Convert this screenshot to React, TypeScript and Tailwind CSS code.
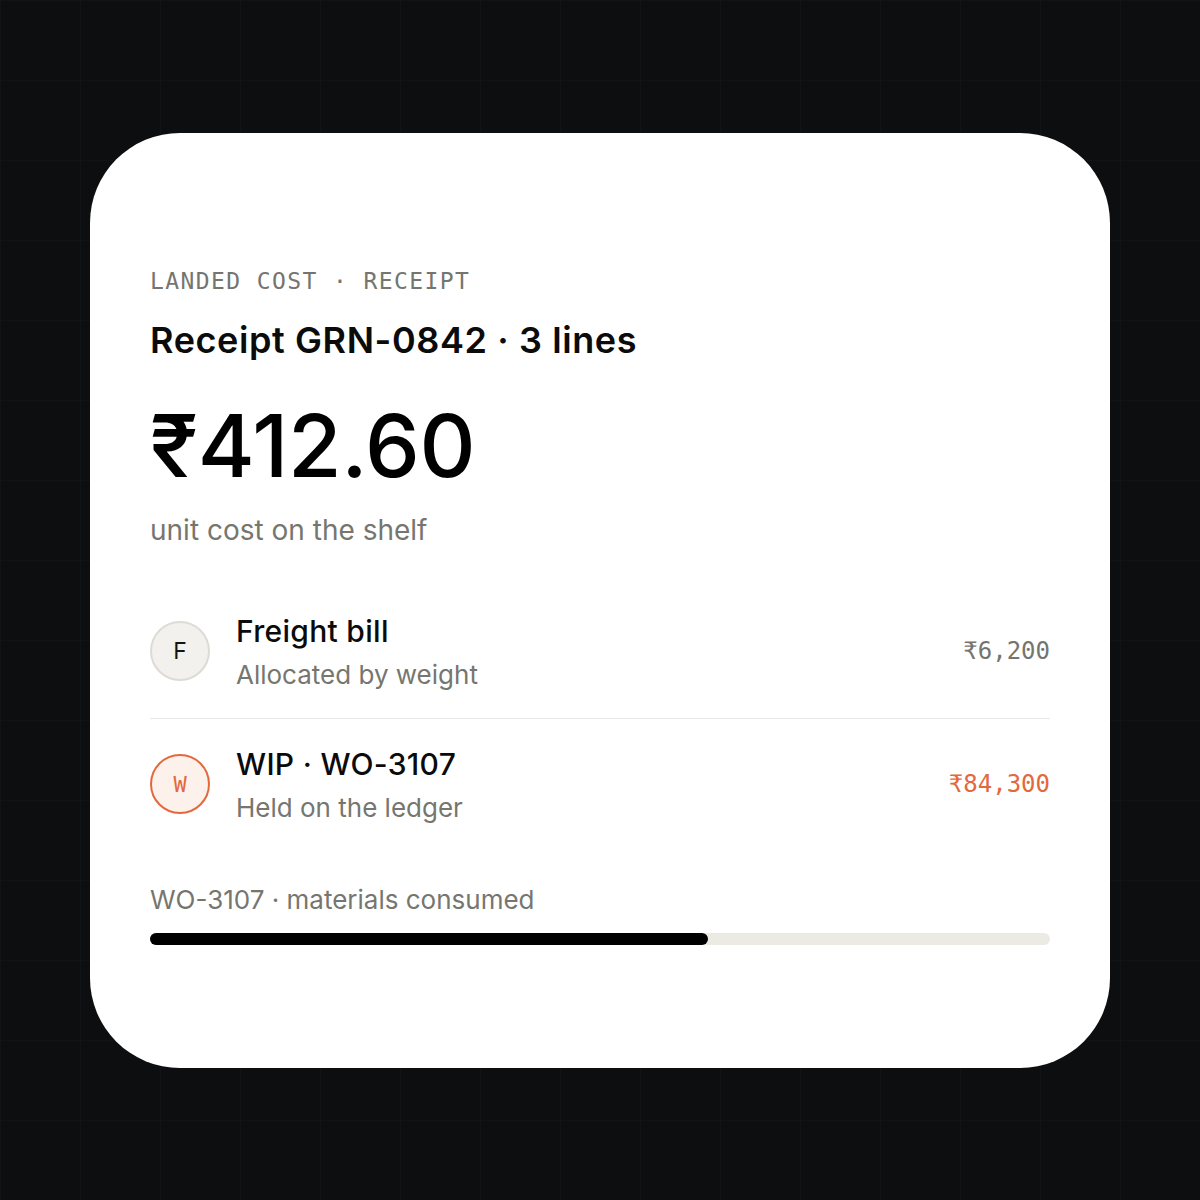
import { useState } from 'react'

interface Line {
  id: string
  initial: string
  title: string
  note: string
  amount: string
  accent?: boolean
}

const lines: Line[] = [
  {
    id: 'freight',
    initial: 'F',
    title: 'Freight bill',
    note: 'Allocated by weight',
    amount: '₹6,200',
  },
  {
    id: 'wip',
    initial: 'W',
    title: 'WIP · WO-3107',
    note: 'Held on the ledger',
    amount: '₹84,300',
    accent: true,
  },
]

const sans = "font-['Inter','Noto_Sans',sans-serif]"
const mono = "font-['DejaVu_Sans_Mono','Liberation_Mono',monospace]"

export default function App() {
  const [consumed] = useState(62)

  return (
    <div
      className={`min-h-[1200px] w-full flex items-center justify-center bg-[#0d0e10] bg-[linear-gradient(to_right,#121316_1px,transparent_1px),linear-gradient(to_bottom,#121316_1px,transparent_1px)] bg-[size:80px_80px] ${sans}`}
    >
      <div className="w-[1020px] h-[935px] rounded-[90px] bg-white px-[60px] pt-[133px]">
        <p className={`${mono} text-[23px] leading-[30px] tracking-[1.4px] text-[#75756f]`}>
          LANDED COST · RECEIPT
        </p>
        <h1 className="mt-[22px] text-[36px] leading-[44px] font-semibold tracking-[0.6px] text-[#0b0b0b]">
          Receipt GRN-0842 · 3 lines
        </h1>
        <div className="mt-[34px] text-[87px] leading-[100px] font-medium tracking-[-0.3px] text-black">
          ₹412.60
        </div>
        <p className="mt-[17px] text-[28px] leading-[34px] text-[#76766f]">
          unit cost on the shelf
        </p>

        <ul className="mt-[65px]">
          {lines.map((line, i) => (
            <li
              key={line.id}
              className={`flex items-center justify-between py-[26px] ${
                i > 0 ? 'border-t border-[#e9e8e4]' : 'pt-0 pb-[27px]'
              }`}
            >
              <div className="flex items-center gap-[26px]">
                <div
                  className={`w-[60px] h-[60px] rounded-full border-2 flex items-center justify-center ${
                    line.accent
                      ? `${mono} text-[22px] border-[#e3683d] bg-[#fdf1eb] text-[#e3683d]`
                      : 'text-[23px] border-[#dcdbd6] bg-[#f2f1ed] text-[#141414]'
                  }`}
                >
                  {line.initial}
                </div>
                <div className="flex flex-col">
                  <span className="text-[30px] leading-[38px] font-medium tracking-[0.3px] text-[#0b0b0b]">
                    {line.title}
                  </span>
                  <span className="mt-[9px] text-[26px] leading-[32px] text-[#76766f]">
                    {line.note}
                  </span>
                </div>
              </div>
              <span
                className={`${mono} text-[24px] ${
                  line.accent ? 'text-[#e3683d]' : 'text-[#75756f]'
                }`}
              >
                {line.amount}
              </span>
            </li>
          ))}
        </ul>

        <p className="mt-[33px] text-[26px] leading-[34px] text-[#76766f]">
          WO-3107 · materials consumed
        </p>
        <div className="mt-[16px] h-[12px] w-full rounded-full bg-[#ebeae3]">
          <div className="h-full rounded-full bg-black" style={{ width: `${consumed}%` }} />
        </div>
      </div>
    </div>
  )
}
